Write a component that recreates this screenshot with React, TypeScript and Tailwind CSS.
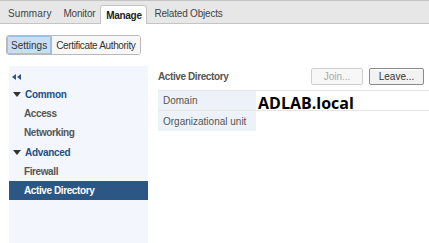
import React from "react";

export default function App() {
  const navItem = "flex h-[19px] items-center pl-[15px] font-bold tracking-[-0.4px]";
  const navGroup = "flex h-[20px] items-center gap-[4px] pl-[4px] font-bold tracking-[-0.3px] text-[#1e4f8a]";
  const caret = (
    <svg width="8" height="5" viewBox="0 0 8 5">
      <path d="M0 0h8L4 5z" fill="#333" />
    </svg>
  );

  return (
    <div className="h-[243px] w-[429px] overflow-hidden bg-white text-[10px] [font-family:'Liberation_Sans',Arial,sans-serif]">
      {/* top tabs */}
      <div className="flex h-[24px] items-end border-y border-[#c4c4c4] bg-[#e7e7e7]">
        <div className="ml-[8px] flex h-[19px] items-center tracking-[0.1px] text-[#444]">Summary</div>
        <div className="ml-[12px] flex h-[19px] items-center tracking-[-0.2px] text-[#444]">Monitor</div>
        <div className="relative top-px ml-[5px] flex h-[19px] w-[47px] items-center justify-center rounded-t-[3px] border border-b-0 border-[#c4c4c4] bg-white font-bold tracking-[-0.3px] text-[#222]">
          Manage
        </div>
        <div className="ml-[7px] flex h-[19px] items-center tracking-[-0.2px] text-[#444]">Related Objects</div>
      </div>

      <div className="ml-[6px] mt-[11px] flex h-[20px] w-fit overflow-hidden rounded-[3px] border border-[#b9b9b9]">
        <div className="flex items-center bg-[#c9ddf3] px-[4px] text-[#333] shadow-[inset_0_0_0_1px_#9fc0e4]">Settings</div>
        <div className="flex items-center border-l border-[#b9b9b9] bg-[#f7f7f7] px-[4px] tracking-[-0.35px] text-[#333]">
          Certificate Authority
        </div>
      </div>

      <div className="mt-[11px] flex">
        {/* side nav */}
        <div className="ml-[9px] h-[200px] w-[139px] bg-[#f3f6fc] pt-[4px]">
          <div className="flex h-[14px] items-center pl-[3px]">
            <svg width="9" height="6" viewBox="0 0 9 6">
              <path d="M4 0v6L0 3zM9 0v6L5 3z" fill="#2c5785" />
            </svg>
          </div>
          <div className={navGroup}>{caret}Common</div>
          <div className={`${navItem} text-[#555]`}>Access</div>
          <div className={`${navItem} text-[#555]`}>Networking</div>
          <div className={navGroup}>{caret}Advanced</div>
          <div className={`${navItem} text-[#555]`}>Firewall</div>
          <div className={`${navItem} bg-[#2c5785] text-white`}>Active Directory</div>
        </div>

        {/* content */}
        <div className="ml-[10px] flex-1 pt-[2px]">
          <div className="flex items-center justify-between pr-[5px]">
            <div className="font-bold tracking-[-0.4px] text-[#555]">Active Directory</div>
            <div className="flex gap-[6px]">
              <div className="flex h-[17px] w-[52px] items-center justify-center rounded-[2px] border border-[#cfcfcf] bg-[#f7f7f7] text-[#aaa]">
                Join...
              </div>
              <div className="flex h-[17px] w-[55px] items-center justify-center rounded-[2px] border border-[#8a8a8a] bg-[#f2f2f2] text-[#333] shadow-[inset_0_1px_0_#fff]">
                Leave...
              </div>
            </div>
          </div>
          <div className="mt-[5px] border-t border-[#e6e6e6]">
            <div className="flex h-[20px] border-b border-[#e6e6e6]">
              <div className="flex w-[98px] items-center bg-[#edf2f8] pl-[5px] text-[#555]">Domain</div>
              <div className="flex items-center pl-[2px] pt-[5px] text-[16px] font-bold text-black [font-family:'Open_Sans',sans-serif]">
                ADLAB.local
              </div>
            </div>
            <div className="flex h-[20px]">
              <div className="flex w-[98px] items-center bg-[#edf2f8] pl-[5px] text-[#555]">Organizational unit</div>
              <div />
            </div>
          </div>
        </div>
      </div>
    </div>
  );
}
